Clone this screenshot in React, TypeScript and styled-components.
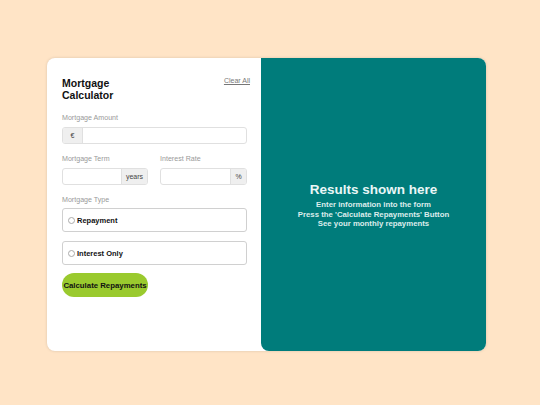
import React from 'react';
import styled, { createGlobalStyle } from 'styled-components';

const GlobalStyle = createGlobalStyle`
    html, body {
        margin: 0;
        padding: 0;
        background: #ffe4c6;
        font-family: "Liberation Sans", Arial, sans-serif;
    }
`;

const Page = styled.div`
    width: 540px;
    height: 405px;
    display: flex;
    align-items: flex-start;
    padding: 58px 0 0 47px;
    box-sizing: border-box;
`;

const Card = styled.div`
    display: flex;
    width: 439px;
    height: 293px;
    background: white;
    border-radius: 8px;
    box-shadow: 0 0 3px rgba(0, 0, 0, 0.15);
`;

const Form = styled.div`
    width: 214px;
    box-sizing: border-box;
    padding: 19px 14px 0 15px;
    display: flex;
    flex-direction: column;
`;

const Header = styled.div`
    display: flex;
    justify-content: space-between;
    align-items: flex-start;
    margin-bottom: 13px;
`;

const Title = styled.h1`
    margin: 0;
    width: 70px;
    font-size: 10.5px;
    line-height: 12px;
    font-weight: bold;
    color: #111;
`;

const ClearAll = styled.a`
    font-size: 7px;
    color: #777;
    text-decoration: underline;
    margin-right: -3px;
`;

const Label = styled.div<{ $tight?: boolean }>`
    font-size: 7.1px;
    color: #999;
    margin-bottom: ${p => (p.$tight ? 3 : 4)}px;
    line-height: 9px;
`;

const Field = styled.div`
    margin-bottom: 11px;
`;

const Row = styled.div`
    display: flex;
    gap: 12px;
`;

const InputBox = styled.div<{ $w?: number }>`
    display: flex;
    height: 17px;
    width: ${p => (p.$w ? `${p.$w}px` : '100%')};
    border: 1px solid #e0e0e0;
    border-radius: 3px;
    box-sizing: border-box;
    overflow: hidden;
    background: white;
`;

const Affix = styled.div<{ $w: number; $left?: boolean }>`
    width: ${p => p.$w}px;
    background: #efefef;
    display: flex;
    align-items: center;
    justify-content: center;
    font-size: 7px;
    color: #444;
    border-${p => (p.$left ? 'right' : 'left')}: 1px solid #e0e0e0;
`;

const Input = styled.input`
    flex: 1;
    min-width: 0;
    border: none;
    outline: none;
    padding: 0 4px;
    background: transparent;
`;

const Option = styled.label`
    display: flex;
    align-items: center;
    height: 24px;
    border: 1px solid #d0d0d0;
    border-radius: 3px;
    box-sizing: border-box;
    padding-left: 5px;
    margin-bottom: 9px;
    font-size: 7.5px;
    font-weight: bold;
    color: #111;
`;

const Radio = styled.span`
    width: 5px;
    height: 5px;
    border: 0.6px solid #aaa;
    border-radius: 50%;
    margin-right: 2px;
`;

const Button = styled.button`
    width: 86px;
    height: 24px;
    border: none;
    border-radius: 12px;
    background: #9aca2e;
    font-family: "Liberation Sans", Arial, sans-serif;
    font-size: 7.8px;
    font-weight: bold;
    color: #111;
    padding: 0;
    margin-top: -1px;
    white-space: nowrap;
`;

const Results = styled.div`
    flex: 1;
    background: #007c7b;
    border-radius: 0 8px 8px 8px;
    display: flex;
    flex-direction: column;
    align-items: center;
    justify-content: center;
    text-align: center;
    padding-top: 2px;
`;

const ResultsTitle = styled.h2`
    margin: 0 0 2px;
    font-size: 13.5px;
    line-height: 16px;
    font-weight: bold;
    color: #eaf7f7;
`;

const ResultsText = styled.p`
    margin: 0;
    font-size: 7.8px;
    line-height: 9.5px;
    font-weight: bold;
    color: #dcecec;
`;

export default function App() {
    return (
        <>
            <GlobalStyle />
            <Page>
                <Card>
                    <Form>
                        <Header>
                            <Title>Mortgage Calculator</Title>
                            <ClearAll>Clear All</ClearAll>
                        </Header>
                        <Field>
                            <Label>Mortgage Amount</Label>
                            <InputBox>
                                <Affix $w={19} $left>€</Affix>
                                <Input />
                            </InputBox>
                        </Field>
                        <Row>
                            <Field>
                                <Label>Mortgage Term</Label>
                                <InputBox $w={86}>
                                    <Input />
                                    <Affix $w={25}>years</Affix>
                                </InputBox>
                            </Field>
                            <Field>
                                <Label>Interest Rate</Label>
                                <InputBox $w={87}>
                                    <Input />
                                    <Affix $w={15}>%</Affix>
                                </InputBox>
                            </Field>
                        </Row>
                        <Label $tight>Mortgage Type</Label>
                        <Option><Radio />Repayment</Option>
                        <Option><Radio />Interest Only</Option>
                        <Button>Calculate Repayments</Button>
                    </Form>
                    <Results>
                        <ResultsTitle>Results shown here</ResultsTitle>
                        <ResultsText>Enter information into the form</ResultsText>
                        <ResultsText>Press the 'Calculate Repayments' Button</ResultsText>
                        <ResultsText>See your monthly repayments</ResultsText>
                    </Results>
                </Card>
            </Page>
        </>
    );
}
